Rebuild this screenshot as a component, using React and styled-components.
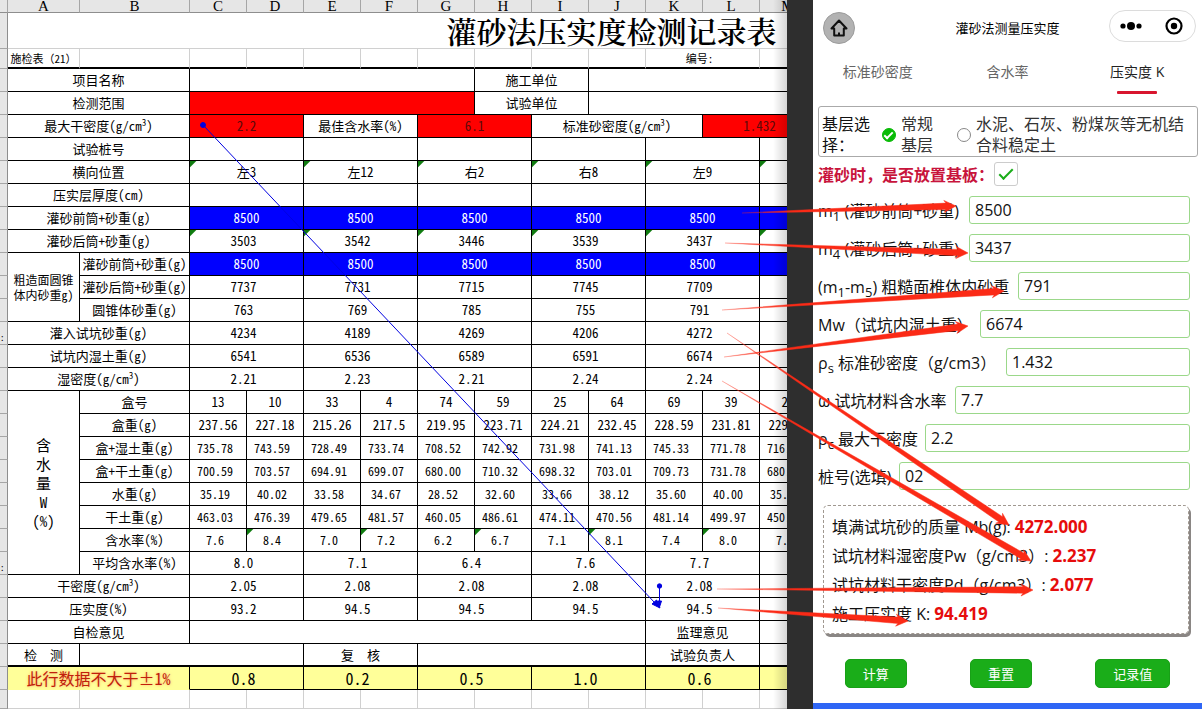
import React from 'react'
import styled, { createGlobalStyle, css } from 'styled-components'

const GlobalStyle = createGlobalStyle`
  * {
    box-sizing: border-box;
  }
  body {
    margin: 0;
    background: #fff;
    overflow: hidden;
  }
`

const sheetFont = '"Noto Sans Mono CJK SC", "Liberation Mono", "Noto Sans CJK SC", monospace'
const phoneFont = '"Open Sans", "Noto Sans CJK SC", sans-serif'

const Page = styled.main`
  position: relative;
  display: flex;
  min-height: 100vh;
  overflow: hidden;
`

/* ---------- sheet ---------- */

const SheetPane = styled.section`
  position: relative;
  flex: 1 1 0;
  min-width: 0;
  overflow: hidden;
  &::after {
    content: '';
    position: absolute;
    top: 0;
    right: 0;
    bottom: 0;
    width: 14px;
    background: linear-gradient(to right, transparent, rgba(0, 0, 0, 0.16));
  }
`

const Sheet = styled.table`
  table-layout: fixed;
  width: 1216px;
  border-spacing: 0;
  font-family: ${sheetFont};
  font-size: 13px;
  line-height: 20px;
  color: #000;
`

const Row = styled.tr`
  height: ${p => p.$h || 23}px;
`

const Letter = styled.th`
  padding: 0;
  height: 13px;
  background: #e6e6e6;
  border-right: 1px solid #a6a6a6;
  border-bottom: 1px solid #8e8e8e;
  font: 15px/12px "Liberation Serif", serif;
`

const Gutter = styled.th`
  padding: 0;
  overflow: hidden;
  background: #e6e6e6;
  border-right: 1px solid #8e8e8e;
  border-bottom: 1px solid #a6a6a6;
  font-weight: normal;
  font-size: 9px;
  text-align: left;
  vertical-align: bottom;
  line-height: 12px;
`

const tones = {
  red: css`
    background-color: #f00;
    color: #5c0a0a;
  `,
  blue: css`
    background-color: #00f;
    color: #fff;
  `,
  yellow: css`
    background-color: #ff9;
    font-size: 16px;
  `,
}

const Cell = styled.td`
  padding: 0;
  border-right: 1px solid #000;
  border-bottom: 1px solid #000;
  text-align: center;
  white-space: nowrap;
  ${p => tones[p.$tone]}
  ${p => p.$number && 'padding-right: 6px;'}
  ${p => p.$small && 'font-size: 12px;'}
  ${p => p.$flag && 'background-image: linear-gradient(135deg, #107c10 4px, transparent 5px);'}
  ${p => p.$thick && 'border-bottom-width: 2px;'}
`

const BlankCell = styled(Cell)`
  border-color: #d0d0d0;
`

const TitleCell = styled(BlankCell)`
  padding-bottom: 2px;
  font-family: "Noto Serif CJK SC", "Noto Sans CJK SC", serif;
  font-size: 30px;
  font-weight: 600;
  line-height: 32px;
`

const MetaCell = styled(Cell)`
  border-right-color: #d0d0d0;
  border-bottom-width: 2px;
  font-size: 11px;
  line-height: 18px;
`

const ConeCell = styled(Cell)`
  font-size: 12px;
  line-height: 15px;
  white-space: normal;
`

const WaterCell = styled(Cell)`
  font-size: 15px;
  line-height: 19px;
`

const NoticeCell = styled(Cell)`
  border-bottom-color: #ff9;
  color: #c0200c;
  text-shadow: 0 0 3px #f9a060;
`

const Cube = styled.sup`
  font-size: 9px;
  line-height: 0;
`

const letters = 'ABCDEFGHIJKLM'.split('')
const pairs = [0, 1, 2, 3, 4, 5]

const density = name => (
  <>
    {name}(g/cm<Cube>3</Cube>)
  </>
)

// one row whose values each take two columns
function PairRow({ label, narrow, values = [], lead, mark, ...cell }) {
  return (
    <Row>
      <Gutter>{mark}</Gutter>
      {lead}
      <Cell colSpan={narrow ? 1 : 2}>{label}</Cell>
      {pairs.map(i => (
        <Cell key={i} colSpan={2} {...cell}>{values[i]}</Cell>
      ))}
    </Row>
  )
}

// one row with a value in every column
function SingleRow({ label, values, lead, flags, ...cell }) {
  return (
    <Row>
      <Gutter />
      {lead}
      <Cell>{label}</Cell>
      {values.map((v, i) => (
        <Cell key={i} $flag={flags && i % 2 === 1} {...cell}>{v}</Cell>
      ))}
    </Row>
  )
}

const before = ['8500', '8500', '8500', '8500', '8500']

function RecordSheet() {
  return (
    <Sheet>
      <colgroup>
        <col style={{ width: 8 }} />
        <col style={{ width: 72 }} />
        <col style={{ width: 110 }} />
        {Array.from({ length: 18 }, (_, i) => <col key={i} style={{ width: 57 }} />)}
      </colgroup>
      <thead>
        <Row $h={13}>
          <Letter />
          {letters.map(l => <Letter key={l}>{l}</Letter>)}
        </Row>
      </thead>
      <tbody>
        <Row $h={36}>
          <Gutter />
          <TitleCell colSpan={20}>灌砂法压实度检测记录表</TitleCell>
        </Row>
        <Row $h={20}>
          <Gutter />
          <MetaCell>施检表（21）</MetaCell>
          {Array.from({ length: 9 }, (_, i) => <MetaCell key={i} />)}
          <MetaCell colSpan={2} $number>编号:</MetaCell>
          <MetaCell />
        </Row>
        <Row>
          <Gutter />
          <Cell colSpan={2}>项目名称</Cell>
          <Cell colSpan={5} />
          <Cell colSpan={2}>施工单位</Cell>
          <Cell colSpan={11} />
        </Row>
        <Row>
          <Gutter />
          <Cell colSpan={2}>检测范围</Cell>
          <Cell colSpan={5} $tone="red" />
          <Cell colSpan={2}>试验单位</Cell>
          <Cell colSpan={11} />
        </Row>
        <Row>
          <Gutter />
          <Cell colSpan={2}>{density('最大干密度')}</Cell>
          <Cell colSpan={2} $tone="red">2.2</Cell>
          <Cell colSpan={2}>最佳含水率(%)</Cell>
          <Cell colSpan={2} $tone="red">6.1</Cell>
          <Cell colSpan={3}>{density('标准砂密度')}</Cell>
          <Cell colSpan={2} $tone="red">1.432</Cell>
        </Row>
        <PairRow label="试验桩号" />
        <PairRow label="横向位置" $flag values={['左3', '左12', '右2', '右8', '左9']} />
        <PairRow label="压实层厚度(cm)" />
        <PairRow label="灌砂前筒+砂重(g)" $tone="blue" values={before} />
        <PairRow label="灌砂后筒+砂重(g)" $flag $number values={['3503', '3542', '3446', '3539', '3437']} />
        <PairRow
          narrow
          lead={<ConeCell rowSpan={3}>粗造面圆锥<br />体内砂重g)</ConeCell>}
          label="灌砂前筒+砂重(g)"
          $tone="blue"
          values={before}
        />
        <PairRow narrow label="灌砂后筒+砂重(g)" $number values={['7737', '7731', '7715', '7745', '7709']} />
        <PairRow narrow label="圆锥体砂重(g)" $number values={['763', '769', '785', '755', '791']} />
        <PairRow label="灌入试坑砂重(g)" mark=":" $number values={['4234', '4189', '4269', '4206', '4272']} />
        <PairRow label="试坑内湿土重(g)" $number values={['6541', '6536', '6589', '6591', '6674']} />
        <PairRow label={density('湿密度')} $number values={['2.21', '2.23', '2.21', '2.24', '2.24']} />
        <SingleRow
          lead={<WaterCell rowSpan={8}>含<br />水<br />量<br />W<br />(%)</WaterCell>}
          label="盒号"
          values={['13', '10', '33', '4', '74', '59', '25', '64', '69', '39', '22']}
        />
        <SingleRow
          label="盒重(g)"
          values={['237.56', '227.18', '215.26', '217.5', '219.95', '223.71', '224.21', '232.45', '228.59', '231.81', '229.50']}
        />
        <SingleRow
          label="盒+湿土重(g)"
          $small
          $number
          values={['735.78', '743.59', '728.49', '733.74', '708.52', '742.92', '731.98', '741.13', '745.33', '771.78', '716.20']}
        />
        <SingleRow
          label="盒+干土重(g)"
          $small
          $number
          values={['700.59', '703.57', '694.91', '699.07', '680.00', '710.32', '698.32', '703.01', '709.73', '731.78', '680.40']}
        />
        <SingleRow
          label="水重(g)"
          $small
          $number
          values={['35.19', '40.02', '33.58', '34.67', '28.52', '32.60', '33.66', '38.12', '35.60', '40.00', '35.80']}
        />
        <SingleRow
          label="干土重(g)"
          $small
          $number
          values={['463.03', '476.39', '479.65', '481.57', '460.05', '486.61', '474.11', '470.56', '481.14', '499.97', '450.90']}
        />
        <SingleRow
          label="含水率(%)"
          $small
          $number
          flags
          values={['7.6', '8.4', '7.0', '7.2', '6.2', '6.7', '7.1', '8.1', '7.4', '8.0', '7.9']}
        />
        <PairRow narrow label="平均含水率(%)" mark=":" $number values={['8.0', '7.1', '6.4', '7.6', '7.7']} />
        <PairRow label={density('干密度')} $number values={['2.05', '2.08', '2.08', '2.08', '2.08']} />
        <PairRow label="压实度(%)" $number values={['93.2', '94.5', '94.5', '94.5', '94.5']} />
        <Row>
          <Gutter />
          <Cell colSpan={2}>自检意见</Cell>
          <Cell colSpan={8} />
          <Cell colSpan={2}>监理意见</Cell>
          <Cell colSpan={2} />
        </Row>
        <Row>
          <Gutter />
          <Cell $thick>检　测</Cell>
          <Cell $thick colSpan={3} />
          <Cell $thick colSpan={2}>复　核</Cell>
          <Cell $thick colSpan={4} />
          <Cell $thick colSpan={2}>试验负责人</Cell>
          <Cell $thick colSpan={2} />
        </Row>
        <Row>
          <Gutter />
          <NoticeCell colSpan={2} $tone="yellow">此行数据不大于±1%</NoticeCell>
          {pairs.map(i => (
            <Cell key={i} colSpan={2} $tone="yellow" $number>
              {['0.8', '0.2', '0.5', '1.0', '0.6'][i]}
            </Cell>
          ))}
        </Row>
        <Row $h={19}>
          <Gutter />
          {letters.map(l => <BlankCell key={l} />)}
        </Row>
      </tbody>
    </Sheet>
  )
}

/* ---------- phone ---------- */

const Divider = styled.div`
  flex: 0 0 26px;
  background: #2e2e2e;
`

const Phone = styled.section`
  flex: 0 0 389px;
  min-width: 0;
  display: flex;
  flex-direction: column;
  background: #fff;
  font-family: ${phoneFont};
  font-size: 16px;
  color: #111;
`

const NavBar = styled.header`
  display: grid;
  grid-template-columns: 83px 1fr 87px;
  align-items: center;
  height: 52px;
  padding: 0 6px 0 10px;
`

const HomeButton = styled.button`
  width: 32px;
  height: 32px;
  margin-top: 4px;
  padding: 0;
  border: 1px solid #9c9c9c;
  border-radius: 50%;
  background: #b2b2b2;
  svg {
    display: block;
  }
`

const NavTitle = styled.h1`
  margin: 0;
  padding-top: 2px;
  font-size: 13px;
  font-weight: normal;
  text-align: center;
  color: #000;
`

const Capsule = styled.div`
  display: flex;
  height: 32px;
  border: 1px solid #dcdcdc;
  border-radius: 16px;
`

const CapsuleButton = styled.button`
  flex: 1;
  padding: 0;
  border: 0;
  background: none;
  svg {
    display: block;
    margin: auto;
  }
`

const Tabs = styled.nav`
  display: flex;
  height: 42px;
`

const Tab = styled.button`
  flex: 1 1 0;
  display: flex;
  flex-direction: column;
  align-items: center;
  justify-content: space-between;
  padding: 9px 0 0;
  border: 0;
  background: none;
  font: 14px/22px ${phoneFont};
  color: ${p => (p.$active ? '#222' : '#666')};
  &::after {
    content: '';
    width: 40px;
    height: 3px;
    border-radius: 1px;
    background: ${p => (p.$active ? '#d8152e' : 'transparent')};
  }
`

const BaseChoice = styled.fieldset`
  display: flex;
  align-items: center;
  min-width: 0;
  height: 51px;
  margin: 12px 4px 0 5px;
  padding: 7px 3px 0;
  border: 1px solid #aaa;
  border-radius: 3px;
  line-height: 21px;
`

const ChoiceName = styled.span`
  flex: 0 0 60px;
`

const Option = styled.label`
  display: flex;
  align-items: center;
  gap: 5px;
  flex: 0 0 ${p => p.$width}px;
  color: #333;
`

const Radio = styled.input`
  appearance: none;
  flex: 0 0 14px;
  height: 14px;
  margin: 0;
  border: 1px solid #888;
  border-radius: 50%;
  &:checked {
    border-color: #09bb07;
    background: #09bb07;
  }
  &:checked::after {
    content: '';
    display: block;
    width: 7px;
    height: 3px;
    margin: 3px 0 0 1px;
    border: solid #fff;
    border-width: 0 0 2px 2px;
    transform: rotate(-45deg);
  }
`

const BoardCheck = styled.label`
  display: flex;
  align-items: center;
  height: 24px;
  margin: 5px 5px 0;
  font-weight: bold;
  color: #c8143c;
`

const Tick = styled.input`
  appearance: none;
  width: 24px;
  height: 24px;
  margin: 0;
  border: 1px solid #ccc;
  border-radius: 3px;
  &:checked::after {
    content: '';
    display: block;
    width: 12px;
    height: 5px;
    margin: 6px 0 0 4px;
    border: solid #1aad19;
    border-width: 0 0 2px 2px;
    transform: rotate(-45deg);
  }
`

const Fields = styled.div`
  display: grid;
  grid-template-columns: minmax(0, 1fr);
  gap: 10px;
  margin: 10px 12px 0 5px;
`

const Field = styled.div`
  display: flex;
  align-items: center;
  height: 28px;
`

const FieldLabel = styled.label`
  flex: 0 0 ${p => p.$width}px;
  white-space: nowrap;
  sub {
    font-size: 13px;
    line-height: 0;
  }
`

const FieldInput = styled.input`
  flex: 1;
  min-width: 0;
  height: 28px;
  padding: 0 5px;
  border: 1px solid #9bd88a;
  border-radius: 3px;
  background: #fff;
  font: 16px ${phoneFont};
  color: #111;
`

const Results = styled.div`
  margin: 15px 13px 0 10px;
  padding: 6px 8px 5px;
  border: 1px dashed #a09890;
  border-radius: 5px;
  box-shadow: 2px 3px 0 #8a8684;
  line-height: 29px;
`

const ResultLine = styled.div`
  height: 29px;
  white-space: nowrap;
  strong {
    padding-left: 4px;
    font-size: 17px;
    color: #e60c0c;
  }
`

const Actions = styled.div`
  display: flex;
  justify-content: space-around;
  margin: 25px 0 15px;
`

const ActionButton = styled.button`
  height: 29px;
  padding: 0 17px;
  border: 1px solid #18a017;
  border-radius: 5px;
  background: #1aad19;
  font: 13px ${phoneFont};
  color: #fff;
`

const BlueStrip = styled.div`
  flex: 1 0 6px;
  background: #2f66f5;
`

const fields = [
  { id: 'm1', width: 151, value: '8500', label: <>m<sub>1</sub> (灌砂前筒+砂重)</> },
  { id: 'm4', width: 151, value: '3437', label: <>m<sub>4</sub> (灌砂后筒+砂重)</> },
  { id: 'm5', width: 200, value: '791', label: <>(m<sub>1</sub>-m<sub>5</sub>) 粗糙面椎体内砂重</> },
  { id: 'mw', width: 162, value: '6674', label: 'Mw（试坑内湿土重）' },
  { id: 'ps', width: 188, value: '1.432', label: <>ρ<sub>s</sub> 标准砂密度（g/cm3）</> },
  { id: 'omega', width: 137, value: '7.7', label: 'ω 试坑材料含水率' },
  { id: 'pc', width: 107, value: '2.2', label: <>ρ<sub>c</sub> 最大干密度</> },
  { id: 'stake', width: 81, value: '02', label: '桩号(选填)' },
]

function Calculator() {
  return (
    <Phone>
      <NavBar>
        <HomeButton aria-label="主页">
          <svg width="30" height="30" viewBox="0 0 30 30" fill="none" stroke="#111" strokeWidth="2" strokeLinejoin="round">
            <path d="M15 7.5 7.5 15.5H10.2V22.5H19.8V15.5H22.5Z" />
            <path d="M15 22.5V19.5" />
          </svg>
        </HomeButton>
        <NavTitle>灌砂法测量压实度</NavTitle>
        <Capsule>
          <CapsuleButton aria-label="更多">
            <svg width="24" height="10" viewBox="0 0 24 10">
              <circle cx="4" cy="5" r="2.6" />
              <circle cx="12" cy="5" r="4" />
              <circle cx="20" cy="5" r="2.6" />
            </svg>
          </CapsuleButton>
          <CapsuleButton aria-label="关闭">
            <svg width="18" height="18" viewBox="0 0 18 18">
              <circle cx="9" cy="9" r="7.5" fill="none" stroke="#000" strokeWidth="2.2" />
              <circle cx="9" cy="9" r="3.2" />
            </svg>
          </CapsuleButton>
        </Capsule>
      </NavBar>
      <Tabs>
        <Tab>标准砂密度</Tab>
        <Tab>含水率</Tab>
        <Tab $active>压实度 K</Tab>
      </Tabs>
      <BaseChoice>
        <ChoiceName>基层选择：</ChoiceName>
        <Option $width={75}>
          <Radio type="radio" name="base" defaultChecked />
          <span>常规<br />基层</span>
        </Option>
        <Option $width={232}>
          <Radio type="radio" name="base" />
          <span>水泥、石灰、粉煤灰等无机结合料稳定土</span>
        </Option>
      </BaseChoice>
      <BoardCheck>
        <span>灌砂时，是否放置基板：</span>
        <Tick type="checkbox" defaultChecked />
      </BoardCheck>
      <Fields>
        {fields.map(f => (
          <Field key={f.id}>
            <FieldLabel htmlFor={f.id} $width={f.width}>{f.label}</FieldLabel>
            <FieldInput id={f.id} defaultValue={f.value} />
          </Field>
        ))}
      </Fields>
      <Results>
        <ResultLine>填满试坑砂的质量 Mb(g):<strong>4272.000</strong></ResultLine>
        <ResultLine>试坑材料湿密度Pw（g/cm3）:<strong>2.237</strong></ResultLine>
        <ResultLine>试坑材料干密度Pd（g/cm3）:<strong>2.077</strong></ResultLine>
        <ResultLine>施工压实度 K:<strong>94.419</strong></ResultLine>
      </Results>
      <Actions>
        <ActionButton>计算</ActionButton>
        <ActionButton>重置</ActionButton>
        <ActionButton>记录值</ActionButton>
      </Actions>
      <BlueStrip />
    </Phone>
  )
}

/* ---------- arrows over both panes ---------- */

const Overlay = styled.svg`
  position: absolute;
  top: 0;
  left: 0;
  pointer-events: none;
`

const arrows = [
  [742, 213, 956, 206],
  [725, 243, 968, 253],
  [722, 310, 1004, 291],
  [724, 357, 968, 326],
  [727, 333, 1009, 525],
  [722, 381, 1031, 561],
  [717, 589, 1033, 590],
  [718, 608, 908, 621],
]

// tapered shaft that grows from a point, then a barbed head
function taper([x1, y1, x2, y2]) {
  const len = Math.hypot(x2 - x1, y2 - y1)
  const ux = (x2 - x1) / len
  const uy = (y2 - y1) / len
  const at = (back, side) =>
    `${(x2 - ux * back - uy * side).toFixed(1)} ${(y2 - uy * back + ux * side).toFixed(1)}`
  return `M${x1} ${y1}L${at(10, 3.2)} ${at(12, 6)} ${at(0, 0)} ${at(12, -6)} ${at(10, -3.2)}Z`
}

function Arrows() {
  return (
    <Overlay width="1202" height="709" aria-hidden="true">
      <defs>
        {arrows.map(([x1, y1, x2, y2], i) => (
          <linearGradient key={i} id={`fade${i}`} gradientUnits="userSpaceOnUse" x1={x1} y1={y1} x2={x2} y2={y2}>
            <stop offset="0" stopColor="#fb2a16" stopOpacity="0.4" />
            <stop offset="0.25" stopColor="#fb2a16" />
          </linearGradient>
        ))}
      </defs>
      <g stroke="#0000e0" fill="#0000e0">
        <path d="M203 125 655 603" strokeWidth="1" />
        <circle cx="203" cy="125" r="2.5" />
        <path d="M660 608 652 604 656.500 600Z" strokeWidth="1" />
        <path d="M659.500 586V604" />
        <circle cx="659.500" cy="586" r="2.200" />
        <path d="M659.500 607 657.500 601H661.500Z" />
      </g>
      {arrows.map((a, i) => (
        <path key={i} d={taper(a)} fill={`url(#fade${i})`} stroke={`url(#fade${i})`} strokeWidth="0.5" />
      ))}
    </Overlay>
  )
}

export default function App() {
  return (
    <>
      <GlobalStyle />
      <Page>
        <SheetPane>
          <RecordSheet />
        </SheetPane>
        <Divider />
        <Calculator />
        <Arrows />
      </Page>
    </>
  )
}
